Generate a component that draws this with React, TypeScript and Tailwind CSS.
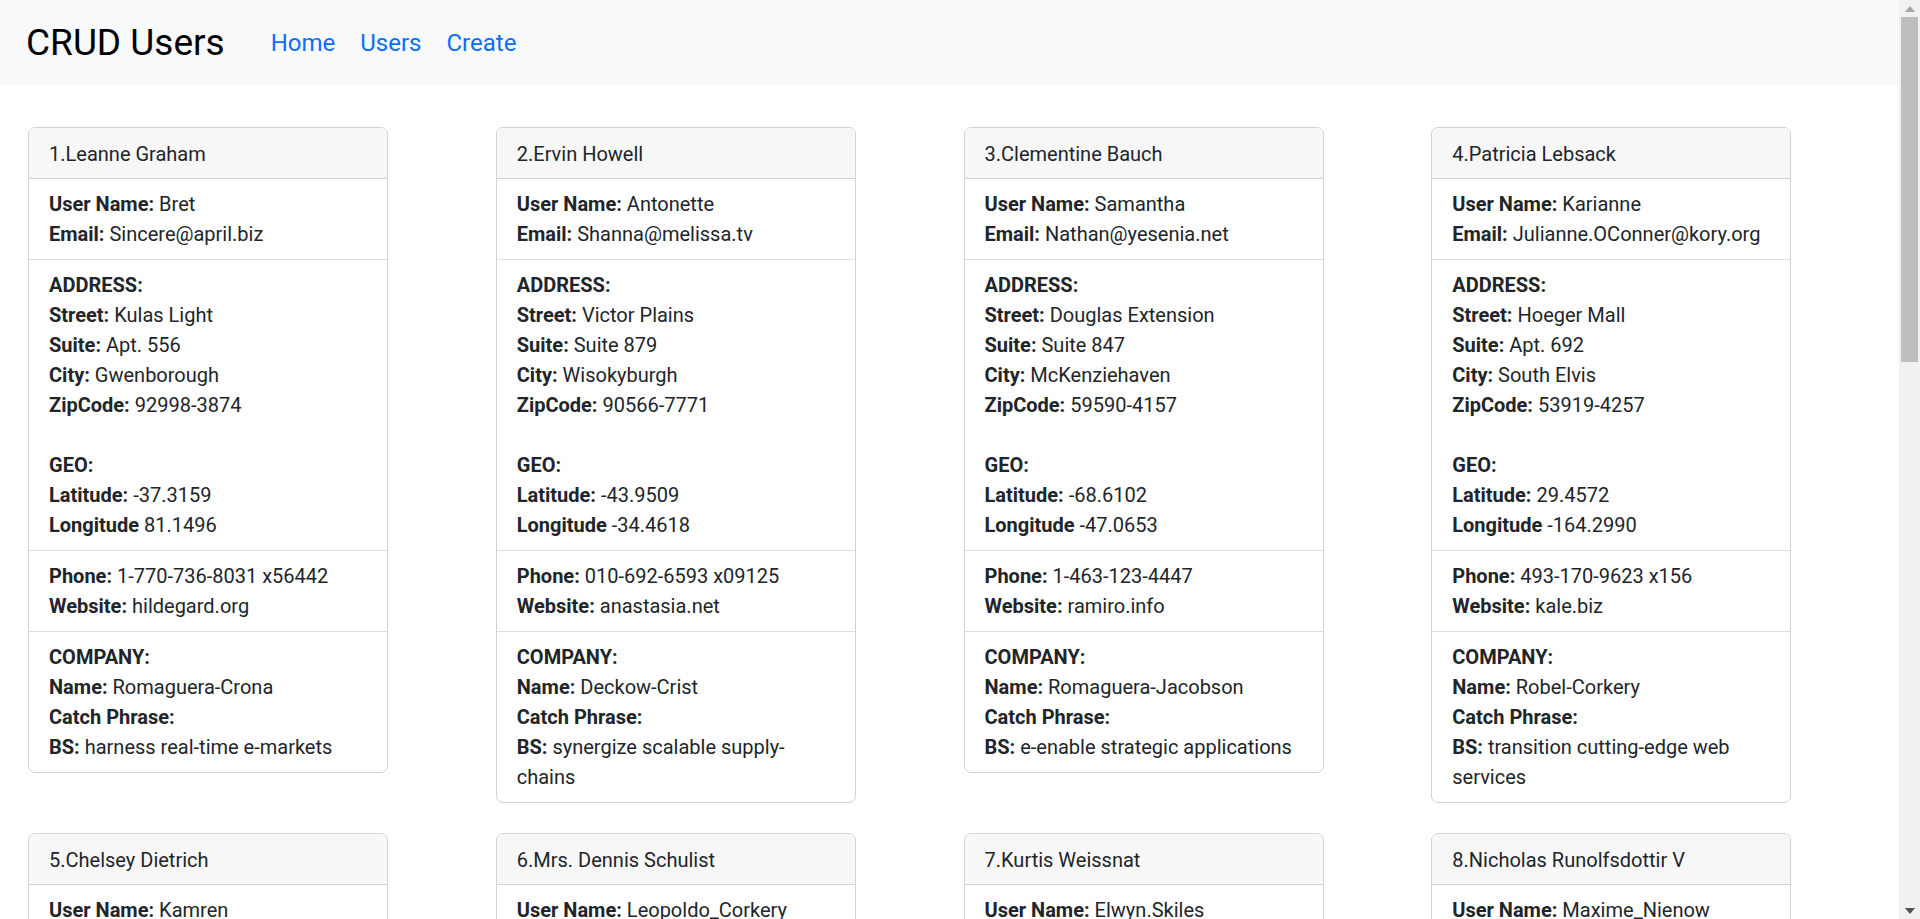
import React from "react";

type User = {
  id: number;
  name: string;
  username: string;
  email: string;
  street: string;
  suite: string;
  city: string;
  zipcode: string;
  lat: string;
  lng: string;
  phone: string;
  website: string;
  company: string;
  bs: string;
};

const users: User[] = [
  { id: 1, name: "Leanne Graham", username: "Bret", email: "Sincere@april.biz", street: "Kulas Light", suite: "Apt. 556", city: "Gwenborough", zipcode: "92998-3874", lat: "-37.3159", lng: "81.1496", phone: "1-770-736-8031 x56442", website: "hildegard.org", company: "Romaguera-Crona", bs: "harness real-time e-markets" },
  { id: 2, name: "Ervin Howell", username: "Antonette", email: "Shanna@melissa.tv", street: "Victor Plains", suite: "Suite 879", city: "Wisokyburgh", zipcode: "90566-7771", lat: "-43.9509", lng: "-34.4618", phone: "010-692-6593 x09125", website: "anastasia.net", company: "Deckow-Crist", bs: "synergize scalable supply-chains" },
  { id: 3, name: "Clementine Bauch", username: "Samantha", email: "Nathan@yesenia.net", street: "Douglas Extension", suite: "Suite 847", city: "McKenziehaven", zipcode: "59590-4157", lat: "-68.6102", lng: "-47.0653", phone: "1-463-123-4447", website: "ramiro.info", company: "Romaguera-Jacobson", bs: "e-enable strategic applications" },
  { id: 4, name: "Patricia Lebsack", username: "Karianne", email: "Julianne.OConner@kory.org", street: "Hoeger Mall", suite: "Apt. 692", city: "South Elvis", zipcode: "53919-4257", lat: "29.4572", lng: "-164.2990", phone: "493-170-9623 x156", website: "kale.biz", company: "Robel-Corkery", bs: "transition cutting-edge web services" },
  { id: 5, name: "Chelsey Dietrich", username: "Kamren", email: "Lucio_Hettinger@annie.ca", street: "Skiles Walks", suite: "Suite 351", city: "Roscoeview", zipcode: "33263", lat: "-31.8129", lng: "62.5342", phone: "(254)954-1289", website: "demarco.info", company: "Keebler LLC", bs: "revolutionize end-to-end systems" },
  { id: 6, name: "Mrs. Dennis Schulist", username: "Leopoldo_Corkery", email: "Karley_Dach@jasper.info", street: "Norberto Crossing", suite: "Apt. 950", city: "South Christy", zipcode: "23505-1337", lat: "-71.4197", lng: "71.7478", phone: "1-477-935-8478 x6430", website: "ola.org", company: "Considine-Lockman", bs: "e-enable innovative applications" },
  { id: 7, name: "Kurtis Weissnat", username: "Elwyn.Skiles", email: "Telly.Hoeger@billy.biz", street: "Rex Trail", suite: "Suite 280", city: "Howemouth", zipcode: "58804-1099", lat: "24.8918", lng: "21.8984", phone: "210.067.6132", website: "elvis.io", company: "Johns Group", bs: "generate enterprise e-tailers" },
  { id: 8, name: "Nicholas Runolfsdottir V", username: "Maxime_Nienow", email: "Sherwood@rosamond.me", street: "Ellsworth Summit", suite: "Suite 729", city: "Aliyaview", zipcode: "45169", lat: "-14.3990", lng: "-120.7677", phone: "586.493.6943 x140", website: "jacynthe.com", company: "Abernathy Group", bs: "e-enable extensible e-tailers" },
  { id: 9, name: "Glenna Reichert", username: "Delphine", email: "Chaim_McDermott@dana.io", street: "Dayna Park", suite: "Suite 449", city: "Bartholomebury", zipcode: "76495-3109", lat: "24.6463", lng: "-168.8889", phone: "(775)976-6794 x41206", website: "conrad.com", company: "Yost and Sons", bs: "aggregate real-time technologies" },
  { id: 10, name: "Clementina DuBuque", username: "Moriah.Stanton", email: "Rey.Padberg@karina.biz", street: "Kattie Turnpike", suite: "Suite 198", city: "Lebsackbury", zipcode: "31428-2261", lat: "-38.2386", lng: "57.2232", phone: "024-648-3804", website: "ambrose.net", company: "Hoeger LLC", bs: "target end-to-end models" },
];

function Line({ label, value }: { label: string; value?: string }) {
  return (
    <div>
      <b className="font-bold">{label}</b>
      {value !== undefined && <> {value}</>}
    </div>
  );
}

function UserCard({ user }: { user: User }) {
  return (
    <div className="w-[360px] rounded-[7px] border border-[#d2d2d2] bg-white">
      <div className="rounded-t-[6px] border-b border-[#d2d2d2] bg-[#f7f7f7] px-5 pt-[11px] pb-[9px]">
        {user.id}.{user.name}
      </div>
      <ul>
        <li className="border-b border-[#dedede] px-5 py-[10px]">
          <Line label="User Name:" value={user.username} />
          <Line label="Email:" value={user.email} />
        </li>
        <li className="border-b border-[#dedede] px-5 py-[10px]">
          <Line label="ADDRESS:" />
          <Line label="Street:" value={user.street} />
          <Line label="Suite:" value={user.suite} />
          <Line label="City:" value={user.city} />
          <Line label="ZipCode:" value={user.zipcode} />
          <div className="h-[30px]" />
          <Line label="GEO:" />
          <Line label="Latitude:" value={user.lat} />
          <Line label="Longitude" value={user.lng} />
        </li>
        <li className="border-b border-[#dedede] px-5 py-[10px]">
          <Line label="Phone:" value={user.phone} />
          <Line label="Website:" value={user.website} />
        </li>
        <li className="px-5 py-[10px]">
          <Line label="COMPANY:" />
          <Line label="Name:" value={user.company} />
          <Line label="Catch Phrase:" />
          <Line label="BS:" value={user.bs} />
        </li>
      </ul>
    </div>
  );
}

// the browser's scrollbar from the screenshot, drawn at the right edge
function ScrollBar() {
  return (
    <aside className="w-[21px] shrink-0 bg-[#f1f1f1]">
      <div className="sticky top-0 flex h-screen flex-col">
        <div className="flex h-[17px] items-center justify-center">
          <svg width="10" height="6" viewBox="0 0 10 6">
            <path d="M0 6 L5 0 L10 6 Z" fill="#a3a3a3" />
          </svg>
        </div>
        <div className="mx-[2px] h-[345px] bg-[#bdbdbd]" />
        <div className="flex-1" />
        <div className="flex h-[17px] items-center justify-center">
          <svg width="10" height="6" viewBox="0 0 10 6">
            <path d="M0 0 L5 6 L10 0 Z" fill="#505050" />
          </svg>
        </div>
      </div>
    </aside>
  );
}

export default function App() {
  const navLinks = ["Home", "Users", "Create"];

  return (
    <div className="flex min-h-screen bg-white text-[20px] leading-[30px] text-[#212529] font-['Segoe_UI',Roboto,sans-serif]">
      <div className="min-w-0 flex-1">
        <nav className="flex h-[85px] items-center bg-[#f8f9fa] pl-[26px]">
          <span className="mr-[46px] text-[37px] leading-none text-black">CRUD Users</span>
          <div className="flex items-center gap-[25px] text-[24px]">
            {navLinks.map((label) => (
              <a key={label} href="#" className="text-[#0d6efd]">
                {label}
              </a>
            ))}
          </div>
        </nav>

        <main className="grid grid-cols-4 items-start gap-y-[30px] pb-[40px] pl-[28px] pt-[42px]">
          {users.map((user) => (
            <UserCard key={user.id} user={user} />
          ))}
        </main>
      </div>
      <ScrollBar />
    </div>
  );
}
